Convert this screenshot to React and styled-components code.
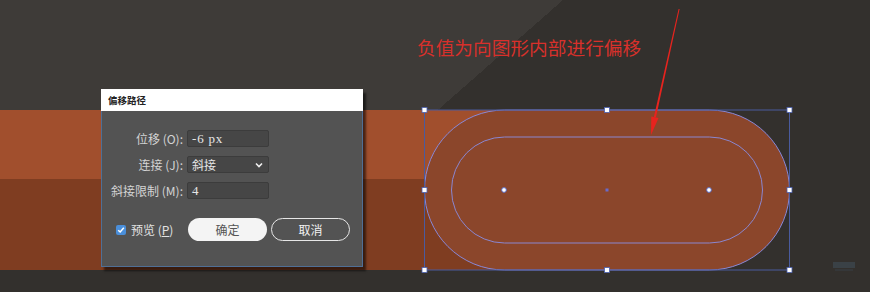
import React from "react";
import styled, { createGlobalStyle } from "styled-components";

const Global = createGlobalStyle`
  html, body { margin: 0; padding: 0; background: #33302d; }
  body { width: 870px; height: 292px; overflow: hidden; }
`;

const CJK = `"Noto Sans CJK SC", "Noto Sans", sans-serif`;

const Canvas = styled.div`
  position: relative;
  width: 870px;
  height: 292px;
  overflow: hidden;
  background: #33302d linear-gradient(138.7deg, #3e3b38 371.6px, #33302d 371.6px) top left / 870px 110px no-repeat;
  font-family: ${CJK};
`;

const Band = styled.div`
  position: absolute;
  left: 0;
  top: 110px;
  width: 600px;
  height: 160px;
  display: grid;
  grid-template-rows: 69px 1fr;
`;

const BandPart = styled.div`
  background: ${(p) => p.$c};
`;

const Art = styled.svg`
  position: absolute;
  left: 0;
  top: 0;
  width: 870px;
  height: 292px;
`;

const Note = styled.div`
  position: absolute;
  left: 417px;
  top: 34px;
  font-size: 18.7px;
  line-height: 26px;
  color: #d8302b;
  white-space: nowrap;
`;

const Dialog = styled.div`
  position: absolute;
  left: 101px;
  top: 89px;
  width: 262px;
  height: 178px;
  display: flex;
  flex-direction: column;
  box-shadow: 3px 4px 2px rgba(0, 0, 0, 0.55);
`;

const TitleBar = styled.div`
  height: 22px;
  background: #ffffff;
  display: flex;
  align-items: center;
  padding-left: 7px;
  font-size: 9.5px;
  font-weight: 700;
  color: #222;
`;

const Body = styled.div`
  flex: 1;
  background: #535353;
  border: 1px solid #4f6f96;
  border-top: none;
  display: flex;
  flex-direction: column;
  padding: 19px 0 0 0;
`;

const Form = styled.div`
  display: grid;
  grid-template-columns: 81px 82px;
  column-gap: 4px;
  row-gap: 9px;
  align-items: center;
`;

const Label = styled.div`
  text-align: right;
  font-size: 12px;
  color: #d4d4d4;
  white-space: nowrap;
  line-height: 17px;
`;

const Field = styled.div`
  height: 17px;
  box-sizing: border-box;
  background: #464646;
  border: 1px solid #3c3c3c;
  border-radius: 2px;
  display: flex;
  align-items: center;
  justify-content: space-between;
  padding: 0 5px 0 4px;
  color: #e6e6e6;
  font-size: ${(p) => (p.$cjk ? "12px" : "13px")};
  letter-spacing: ${(p) => (p.$cjk ? "0" : "0.8px")};
  font-family: ${(p) => (p.$cjk ? CJK : `"Liberation Serif", serif`)};
  white-space: pre;
`;

const Footer = styled.div`
  display: flex;
  align-items: center;
  margin-top: 19px;
  padding-left: 14px;
`;

const Check = styled.div`
  width: 10px;
  height: 10px;
  border-radius: 2px;
  background: #4a8fdb;
  display: flex;
  align-items: center;
  justify-content: center;
`;

const CheckText = styled.div`
  margin-left: 5px;
  font-size: 12px;
  color: #e2e2e2;
  width: 57px;
  white-space: nowrap;
  & u { text-underline-offset: 1px; }
`;

const Buttons = styled.div`
  display: flex;
  gap: 4px;
`;

const Btn = styled.div`
  width: 79px;
  height: 23px;
  box-sizing: border-box;
  border-radius: 12px;
  display: flex;
  align-items: center;
  justify-content: center;
  font-size: 12px;
  background: ${(p) => (p.$primary ? "#f4f4f4" : "transparent")};
  color: ${(p) => (p.$primary ? "#555" : "#f2f2f2")};
  border: ${(p) => (p.$primary ? "none" : "1.5px solid #e6e6e6")};
`;

const handles = [
  [424.5, 110], [607, 110], [789.5, 110],
  [424.5, 190], [789.5, 190],
  [424.5, 270], [607, 270], [789.5, 270],
];

export default function App() {
  return (
    <>
      <Global />
      <Canvas>
        <Band>
          <BandPart $c="#a14f2d" />
          <BandPart $c="#7f3d21" />
        </Band>
        <Art viewBox="0 0 870 292">
          <rect x="424.5" y="110" width="365" height="160" rx="80" fill="#8b462b" stroke="#8888d8" strokeWidth="1" />
          <rect x="451.5" y="137" width="311" height="106" rx="53" fill="none" stroke="#8a86d0" strokeWidth="1" />
          <rect x="424.5" y="110" width="365" height="160" fill="none" stroke="#4a5b9e" strokeWidth="1" />
          {handles.map(([x, y], i) => (
            <rect key={i} x={x - 2.5} y={y - 2.5} width="5" height="5" fill="#ffffff" stroke="#4a5fb0" strokeWidth="0.8" />
          ))}
          <circle cx="504" cy="190" r="2.4" fill="#ffffff" stroke="#5a6ac0" strokeWidth="1" />
          <circle cx="709" cy="190" r="2.4" fill="#ffffff" stroke="#5a6ac0" strokeWidth="1" />
          <rect x="605.5" y="188.5" width="3" height="3" fill="#6a6ac8" />
          <polygon points="679.6,9 678.6,9 653.8,117.2 655.9,117.6" fill="#e8231e" />
          <polygon points="658.5,118.1 651.3,116.4 651,135" fill="#e8231e" />
          <g opacity="0.3">
            <rect x="833" y="262" width="22" height="6" fill="#4a6a80" />
            <rect x="835" y="269" width="18" height="2" fill="#3a4a55" />
          </g>
        </Art>
        <Note>负值为向图形内部进行偏移</Note>
        <Dialog>
          <TitleBar>偏移路径</TitleBar>
          <Body>
            <Form>
              <Label>位移 (O):</Label>
              <Field>-6 px</Field>
              <Label>连接 (J):</Label>
              <Field $cjk>
                <span>斜接</span>
                <svg width="8" height="6" viewBox="0 0 8 6">
                  <path d="M1 1.5 L4 4.5 L7 1.5" fill="none" stroke="#f0f0f0" strokeWidth="1.6" />
                </svg>
              </Field>
              <Label>斜接限制 (M):</Label>
              <Field>4</Field>
            </Form>
            <Footer>
              <Check>
                <svg width="8" height="8" viewBox="0 0 8 8">
                  <path d="M1.2 4.2 L3.2 6 L6.8 1.8" fill="none" stroke="#ffffff" strokeWidth="1.5" />
                </svg>
              </Check>
              <CheckText>
                预览 (<u>P</u>)
              </CheckText>
              <Buttons>
                <Btn $primary>确定</Btn>
                <Btn>取消</Btn>
              </Buttons>
            </Footer>
          </Body>
        </Dialog>
      </Canvas>
    </>
  );
}
